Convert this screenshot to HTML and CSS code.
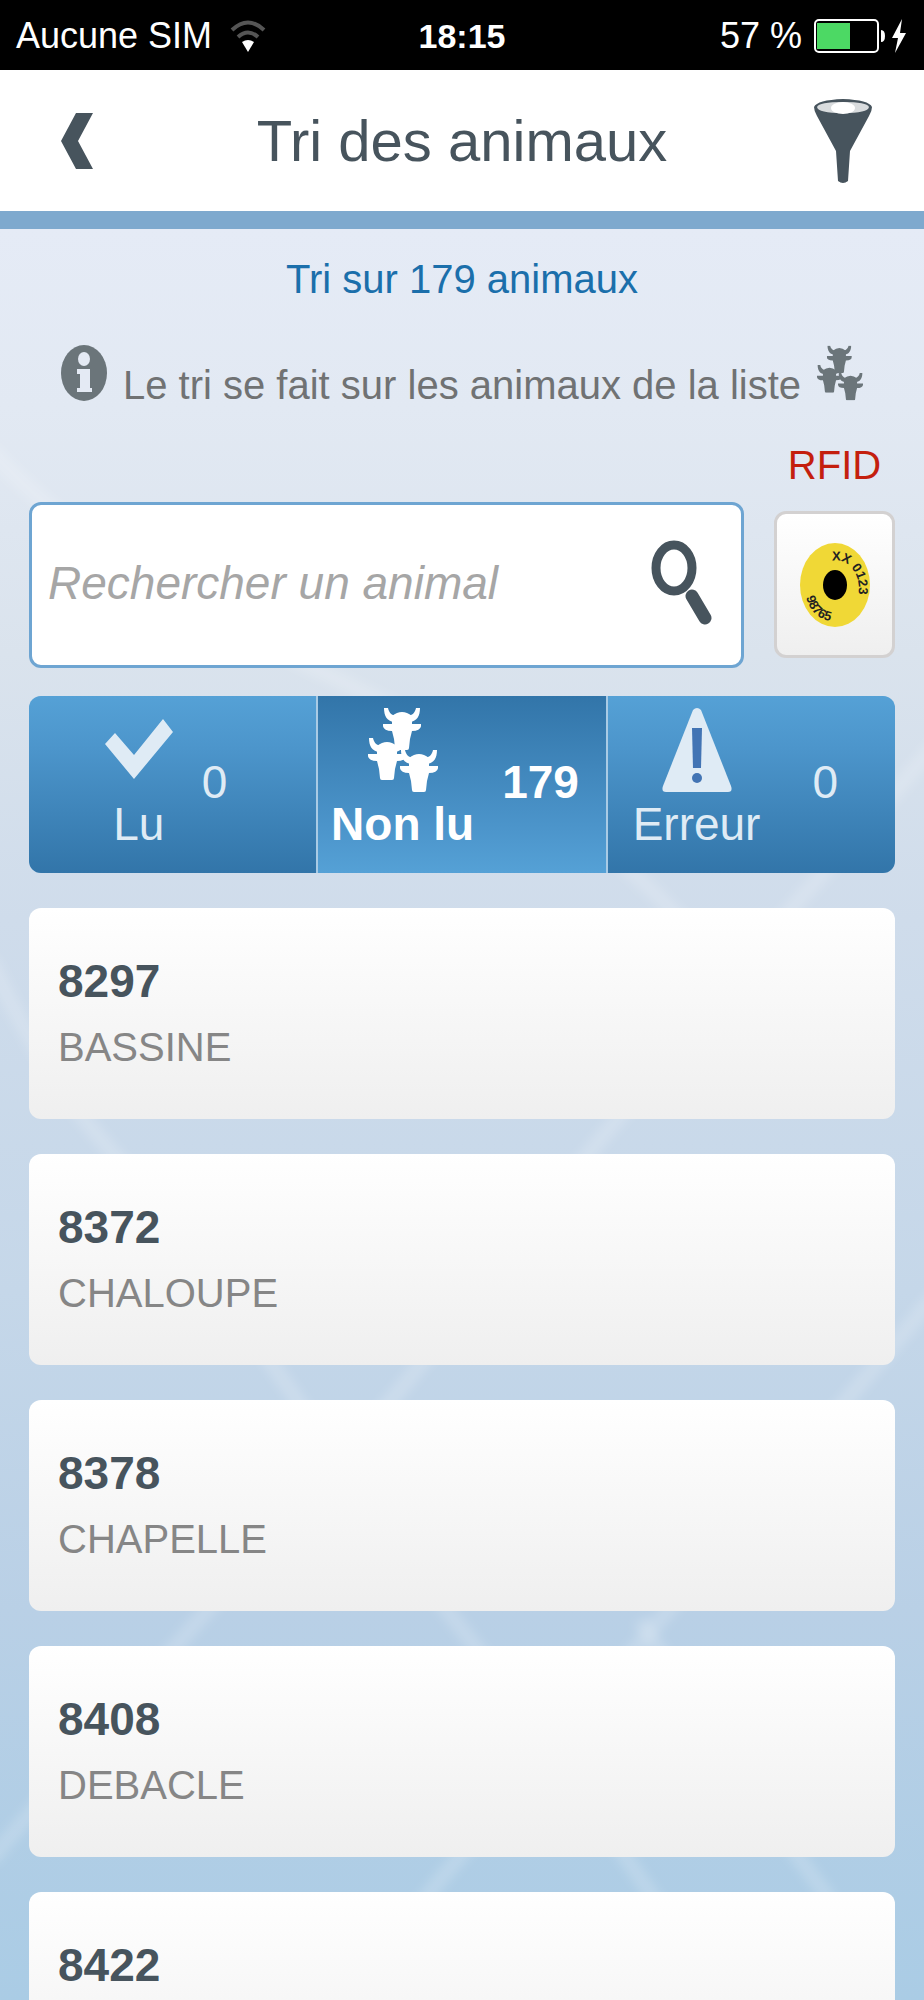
FILE: index.html
```
<!DOCTYPE html>
<html lang="fr">
<head>
    <meta charset="UTF-8">
    <meta name="viewport" content="width=device-width, initial-scale=1.0">
    <title>Tri des animaux</title>
    <link rel="stylesheet" href="styles.css">
</head>
<body>
    <svg class="sprite" aria-hidden="true">
        <symbol id="cow-head" viewBox="0 0 38 42">
            <path d="M1 0 C1 8 4 13 11 14 L15 8 C9 8 6 5 5 0 Z M37 0 C37 8 34 13 27 14 L23 8 C29 8 32 5 33 0 Z"/>
            <path d="M9 8 Q19 0 29 8 L29 16 L38 16 Q39 23 29 23 L27 31 L26 40 Q26 42 24 42 L14 42 Q12 42 12 40 L11 31 L9 23 Q-1 23 0 16 L9 16 Z"/>
        </symbol>
        <symbol id="herd" viewBox="0 0 70 84">
            <use href="#cow-head" x="15" y="0" width="38" height="42"/>
            <use href="#cow-head" x="0" y="30" width="38" height="42"/>
            <use href="#cow-head" x="32" y="42" width="38" height="42"/>
        </symbol>
    </svg>

    <div class="status-bar">
        <div class="status-left">
            <span>Aucune SIM</span>
            <svg class="wifi-icon" viewBox="0 0 36 32">
                <path d="M2 10 Q18 -5 34 10" fill="none" stroke="#555" stroke-width="4"/>
                <path d="M8 17 Q18 8 28 17" fill="none" stroke="#555" stroke-width="4"/>
                <path d="M12 22 Q18 18 24 22 L18 32 Z" fill="#fff"/>
            </svg>
        </div>
        <span class="status-time">18:15</span>
        <div class="status-right">
            <span>57 %</span>
            <svg class="battery-icon" viewBox="0 0 94 36">
                <rect x="1" y="2" width="63" height="32" rx="4" fill="none" stroke="#fff" stroke-width="2"/>
                <rect x="3" y="5" width="33" height="26" fill="#4cd964"/>
                <path d="M67 12 Q71 12 71 18 Q71 24 67 24 Z" fill="#fff"/>
                <path d="M88 1 L78 20 L84 20 L81 35 L92 15 L86 15 Z" fill="#fff"/>
            </svg>
        </div>
    </div>

    <header class="header">
        <button class="header-button" type="button" aria-label="Retour">
            <svg class="back-icon" viewBox="0 0 32 56">
                <path d="M15 0 H32 L17 28 L32 56 H15 L0 28 Z"/>
            </svg>
        </button>
        <h1 class="page-title">Tri des animaux</h1>
        <button class="header-button" type="button" aria-label="Filtrer">
            <svg class="filter-icon" viewBox="0 0 58 84">
                <path d="M0 8 Q3 1 29 0 Q55 1 58 8 Q58 12 55 17 L36 52 L34 82 Q29 86 24 82 L22 52 L3 17 Q0 12 0 8 Z"/>
                <path d="M3 8 Q5 3 29 3 Q53 3 55 8 Q54 14 29 14 Q4 14 3 8 Z" fill="#d9dcde"/>
                <ellipse cx="29" cy="9" rx="12" ry="6" fill="#fff"/>
            </svg>
        </button>
    </header>

    <main class="content">
        <p class="summary">Tri sur 179 animaux</p>
        <p class="notice">
            <svg class="notice-icon" viewBox="0 0 46 56">
                <ellipse cx="23" cy="28" rx="23" ry="28"/>
                <ellipse cx="23" cy="14" rx="6" ry="7" fill="#e4eaf4"/>
                <path d="M16 24 H29 V43 H31 V47 H16 V43 H19 V29 H16 Z" fill="#e4eaf4"/>
            </svg>
            <span>Le tri se fait sur les animaux de la liste</span>
            <svg class="notice-icon" viewBox="0 0 70 84"><use href="#herd"/></svg>
        </p>

        <div class="search-row">
            <form class="search-form">
                <input class="search-input" type="search" placeholder="Rechercher un animal" aria-label="Rechercher un animal">
                <button class="search-button" type="submit" aria-label="Rechercher">
                    <svg class="search-icon" viewBox="0 0 61 86">
                        <ellipse cx="23" cy="28" rx="18" ry="23" fill="none" stroke="#47545d" stroke-width="9"/>
                        <path d="M41 56 L54 78" stroke="#47545d" stroke-width="13" stroke-linecap="round"/>
                    </svg>
                </button>
            </form>
            <div class="rfid">
                <span class="rfid-label" id="rfidLabel">RFID</span>
                <button class="rfid-button" type="button" aria-labelledby="rfidLabel">
                    <svg class="tag-icon" viewBox="0 0 70 84">
                        <defs>
                            <path id="tagTop" d="M32 18 C48 14 66 34 56 60"/>
                            <path id="tagBottom" d="M6 54 C12 78 34 84 52 72"/>
                        </defs>
                        <ellipse cx="35" cy="42" rx="35" ry="42" fill="#f0d836"/>
                        <ellipse cx="35" cy="42" rx="12" ry="15" fill="#000"/>
                        <text class="tag-text"><textPath href="#tagTop">XX 0123</textPath></text>
                        <text class="tag-text"><textPath href="#tagBottom">98765</textPath></text>
                    </svg>
                </button>
            </div>
        </div>

        <div class="tabs" role="tablist">
            <button class="tab" type="button" role="tab" aria-selected="false">
                <span class="tab-label">
                    <svg class="tab-icon" viewBox="0 0 70 84">
                        <path d="M1 36 L11 25 L30 47 L59 11 L69 24 L30 71 Z"/>
                    </svg>
                    Lu
                </span>
                <span class="tab-count">0</span>
            </button>
            <button class="tab tab-active" type="button" role="tab" aria-selected="true">
                <span class="tab-label">
                    <svg class="tab-icon" viewBox="0 0 70 84"><use href="#herd"/></svg>
                    Non lu
                </span>
                <span class="tab-count">179</span>
            </button>
            <button class="tab tab-error" type="button" role="tab" aria-selected="false">
                <span class="tab-label">
                    <svg class="tab-icon" viewBox="0 0 70 84">
                        <path d="M31 2 Q35 -2 39 2 L69 78 Q71 84 66 84 L4 84 Q-1 84 1 78 Z"/>
                        <path d="M30 20 H40 L39 60 H31 Z" fill="#4274b4"/>
                        <circle cx="35" cy="70" r="5" fill="#4274b4"/>
                    </svg>
                    Erreur
                </span>
                <span class="tab-count">0</span>
            </button>
        </div>

        <ul class="animal-list">
            <li class="animal-card">
                <strong class="animal-number">8297</strong>
                <span class="animal-name">BASSINE</span>
            </li>
            <li class="animal-card">
                <strong class="animal-number">8372</strong>
                <span class="animal-name">CHALOUPE</span>
            </li>
            <li class="animal-card">
                <strong class="animal-number">8378</strong>
                <span class="animal-name">CHAPELLE</span>
            </li>
            <li class="animal-card">
                <strong class="animal-number">8408</strong>
                <span class="animal-name">DEBACLE</span>
            </li>
            <li class="animal-card">
                <strong class="animal-number">8422</strong>
            </li>
        </ul>
    </main>
</body>
</html>
```

FILE: styles.css
```
* {
    box-sizing: border-box;
}

body {
    margin: 0;
    height: 100vh;
    overflow: hidden;
    display: flex;
    flex-direction: column;
    font-family: "Liberation Sans", Arial, sans-serif;
    color: #47545d;
}

button {
    font: inherit;
    color: inherit;
    padding: 0;
    border: none;
    background: none;
    cursor: pointer;
}

svg {
    display: block;
    flex: none;
    fill: currentColor;
}

.sprite {
    position: absolute;
    width: 0;
    height: 0;
}

/* Status bar */
.status-bar {
    flex: none;
    display: grid;
    grid-template-columns: 1fr auto 1fr;
    align-items: center;
    height: 70px;
    padding: 2px 16px 0;
    background: #000;
    color: #fff;
    font-size: 36px;
    line-height: 48px;
}

.status-left,
.status-right {
    display: flex;
    align-items: center;
    gap: 18px;
}

.status-right {
    justify-content: flex-end;
    gap: 12px;
}

.status-time {
    font-size: 34px;
    font-weight: bold;
}

.wifi-icon {
    width: 36px;
    height: 32px;
}

.battery-icon {
    width: 94px;
    height: 36px;
}

/* Header */
.header {
    flex: none;
    display: flex;
    align-items: center;
    justify-content: space-between;
    height: 159px;
    padding: 0 52px;
    background: #fff;
    border-bottom: 18px solid #7ea9ce;
}

.header-button {
    width: 58px;
}

.back-icon {
    width: 32px;
    height: 56px;
    margin-left: 9px;
}

.filter-icon {
    width: 58px;
    height: 84px;
}

.page-title {
    margin: 0;
    font-size: 58px;
    font-weight: normal;
    line-height: 80px;
}

/* Content */
.content {
    flex: 1;
    min-height: 0;
    padding: 20px 29px 0;
    background:
        url("data:image/svg+xml,%3Csvg xmlns='http://www.w3.org/2000/svg' viewBox='0 229 924 1771' preserveAspectRatio='none'%3E%3Cdefs%3E%3Cfilter id='b'%3E%3CfeGaussianBlur stdDeviation='5'/%3E%3C/filter%3E%3C/defs%3E%3Cg fill='none' stroke='%23fff' stroke-opacity='.16' stroke-width='16' filter='url(%23b)'%3E%3Cpath d='M-10 450Q40 505 120 560T380 700T720 960'/%3E%3Cpath d='M-10 960Q40 1070 110 1150T290 1390T470 1640T650 1893T720 2010'/%3E%3Cpath d='M940 740L795 905L600 1140L400 1390L190 1630L-10 1860'/%3E%3Cpath d='M940 1290L660 1620L440 1880L340 2010'/%3E%3Cpath d='M640 1620Q740 1780 830 1900'/%3E%3C/g%3E%3C/svg%3E") 0 0 / 100% 100% no-repeat,
        linear-gradient(#e5ebf6 0, #e2e9f3 10%, #dae3ed 24%, #cfdceb 39%, #c5d7e9 60%, #b9d0e6 78%, #aacce5 100%);
}

.summary {
    margin: 0;
    text-align: center;
    color: #1b6fab;
    font-size: 40px;
    line-height: 60px;
}

.notice {
    display: flex;
    align-items: flex-start;
    justify-content: center;
    gap: 16px;
    margin: 36px 0 0;
    color: #6b757a;
    font-size: 40px;
    line-height: 60px;
}

.notice span {
    padding-top: 10px;
    color: #707273;
    white-space: nowrap;
}

.notice-icon {
    width: 46px;
    height: 56px;
}

.search-row {
    display: flex;
    align-items: flex-end;
    gap: 30px;
    margin-top: 20px;
}

.search-form {
    flex: 1;
    min-width: 0;
    display: flex;
    align-items: center;
    height: 166px;
    padding: 0 29px 4px 16px;
    background: #fff;
    border: 3px solid #6ea5d2;
    border-radius: 12px;
}

.search-input {
    flex: 1;
    min-width: 0;
    padding: 0;
    border: none;
    outline: none;
    background: none;
    color: #47545d;
    font-family: inherit;
    font-size: 46px;
    font-style: italic;
}

.search-input::placeholder {
    color: #a6a6a6;
    opacity: 1;
}

.search-icon {
    width: 61px;
    height: 86px;
}

.rfid {
    flex: none;
    display: flex;
    flex-direction: column;
    align-items: center;
    width: 121px;
    padding-bottom: 10px;
}

.rfid-label {
    margin-bottom: 16px;
    color: #c41f0e;
    font-size: 40px;
    line-height: 60px;
}

.rfid-button {
    display: flex;
    align-items: center;
    justify-content: center;
    width: 100%;
    height: 147px;
    background: linear-gradient(#fff, #efefef);
    border: 3px solid #d3d1d1;
    border-radius: 12px;
}

.tag-icon {
    width: 70px;
    height: 84px;
}

.tag-text {
    font-size: 13px;
    font-weight: bold;
    fill: #222;
}

/* Tabs */
.tabs {
    display: grid;
    grid-template-columns: 1fr 1fr 1fr;
    gap: 2px;
    height: 177px;
    margin-top: 28px;
    background: #a9cbe5;
    border-radius: 12px;
    overflow: hidden;
}

.tab {
    display: flex;
    align-items: center;
    justify-content: center;
    gap: 28px;
    padding: 0 14px 6px 0;
    background: linear-gradient(#55a1d6, #4c95cb 30%, #3275a9);
    color: #dfebf5;
    font-size: 46px;
    line-height: 64px;
    white-space: nowrap;
}

.tab-active {
    background: linear-gradient(#3275a9, #4c95cb 75%, #55a1d6);
    color: #fff;
    font-weight: bold;
}

.tab-error {
    gap: 52px;
    padding-right: 32px;
}

.tab-label {
    display: flex;
    flex-direction: column;
    align-items: center;
}

.tab-icon {
    width: 70px;
    height: 84px;
}

/* Animal list */
.animal-list {
    display: flex;
    flex-direction: column;
    gap: 35px;
    margin: 35px 0 0;
    padding: 0;
    list-style: none;
}

.animal-card {
    flex: none;
    height: 211px;
    padding: 40px 29px;
    background: linear-gradient(#fff, #efefef);
    border-radius: 12px;
}

.animal-number,
.animal-name {
    display: block;
    line-height: 66px;
}

.animal-number {
    font-size: 46px;
}

.animal-name {
    color: #868686;
    font-size: 40px;
}
```
